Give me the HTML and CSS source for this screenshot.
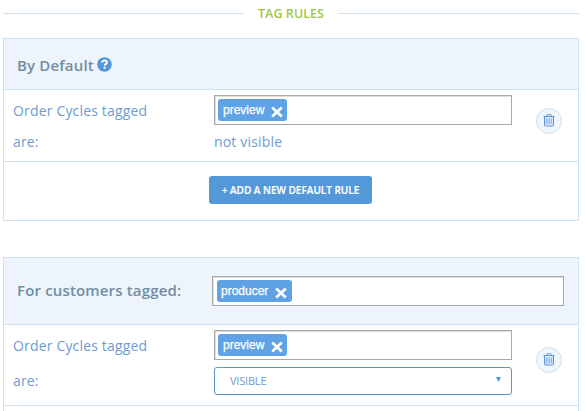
FILE: index.html
```html
<!DOCTYPE html>
<html lang="en">
<head>
<meta charset="utf-8">
<title>Tag Rules</title>
<link rel="stylesheet" href="styles.css">
</head>
<body>
<svg class="defs" width="0" height="0">
  <symbol id="cross" viewBox="0 0 12 12"><path d="M1.2 1.6 10.8 10.4M10.8 1.6 1.2 10.4" stroke="#fff" stroke-width="2.7" fill="none"/></symbol>
  <symbol id="trash" viewBox="0 0 12 13">
    <path d="M2 3.5h8v8H2z" fill="#d3e1f6"/>
    <path d="M.5 2.5h11M3.5 2.5V1.6Q3.5.7 4.4.7h3.2q.9 0 .9.9v.9M1.5 2.5v8.6q0 .9.9.9h7.2q.9 0 .9-.9V2.5" fill="none" stroke="#5c93d0"/>
    <path d="M3.5 4.5v5.5M5.2 4.5v5.5M6.8 4.5v5.5M8.5 4.5v5.5" fill="none" stroke="#8aaee2" stroke-width=".8"/>
  </symbol>
</svg>
<main class="rules">
  <h1 class="legend"><span class="legend-text">TAG RULES</span></h1>

  <section class="group">
    <header class="head">
      <h2 class="title">By Default</h2>
      <svg class="help" viewBox="0 0 15 15"><circle cx="7.5" cy="7.5" r="7.3" fill="#5498da"/><path d="M4.9 5.4Q5.4 3.5 7.5 3.5q2.4 0 2.4 1.9 0 1.2-1.2 1.8-1.1.5-1.1 1.5" fill="none" stroke="#fff" stroke-width="1.9"/><path d="M6.6 9.9h2v1.8h-2z" fill="#fff"/></svg>
    </header>
    <div class="rule">
      <div class="labels"><span>Order Cycles tagged</span><span>are:</span></div>
      <div class="fields">
        <div class="tags"><span class="tag"><span class="tag-name">preview</span><svg class="x"><use href="#cross"/></svg></span></div>
        <span class="value">not visible</span>
      </div>
      <button class="delete" aria-label="Delete"><svg class="bin"><use href="#trash"/></svg></button>
    </div>
    <footer class="foot"><button class="add"><span class="add-text">+ ADD A NEW DEFAULT RULE</span></button></footer>
  </section>

  <section class="group customers">
    <header class="head">
      <h2 class="title">For customers tagged:</h2>
      <div class="tags"><span class="tag"><span class="tag-name">producer</span><svg class="x"><use href="#cross"/></svg></span></div>
    </header>
    <div class="rule">
      <div class="labels"><span>Order Cycles tagged</span><span>are:</span></div>
      <div class="fields">
        <div class="tags"><span class="tag"><span class="tag-name">preview</span><svg class="x"><use href="#cross"/></svg></span></div>
        <div class="select"><span>VISIBLE</span><svg class="arrow" viewBox="0 0 5 5"><path d="M0 0h5L2.5 5z" fill="#5498da"/></svg></div>
      </div>
      <button class="delete" aria-label="Delete"><svg class="bin"><use href="#trash"/></svg></button>
    </div>
    <div class="rest"></div>
  </section>
</main>
</body>
</html>
```
FILE: styles.css
```css
* { box-sizing: border-box; }
body {
  margin: 0;
  height: 411px;
  overflow: hidden;
  background: #fff;
  color: #6e9cd2;
  font: 14px/20px "Open Sans", sans-serif;
  letter-spacing: .17px;
}
.defs { display: block; }
.rules { width: 576px; margin-left: 3px; }
h1, h2 { margin: 0; }
button { padding: 0; border: 0; font-family: inherit; }

.legend {
  display: flex;
  align-items: center;
  gap: 14px;
  height: 27px;
  margin-bottom: 11px;
  color: #9fc642;
  font-size: 12.5px;
  font-weight: 600;
  letter-spacing: .05px;
}
.legend::before, .legend::after {
  content: "";
  flex: 1;
  height: 1px;
  background: #cee1f0;
}
.legend-text { white-space: nowrap; }

.group { border: 1px solid #cee1f0; }
.customers { margin-top: 36px; }
.head {
  display: flex;
  align-items: center;
  height: 51px;
  padding-left: 13px;
  background: #edf4fc;
  border-bottom: 1px solid #cee1f0;
}
.title {
  color: #738da3;
  font-size: 15px;
  font-weight: 600;
  line-height: 20px;
  letter-spacing: .16px;
  padding-top: 2px;
  white-space: nowrap;
}
.help { width: 15px; height: 15px; margin-left: 3px; }

.rule {
  display: flex;
  height: 72px;
  padding: 5px 0 0 9px;
  border-bottom: 1px solid #cee1f0;
}
.labels {
  display: flex;
  flex-direction: column;
  gap: 11px;
  width: 201px;
  padding-top: 6px;
}
.fields {
  display: flex;
  flex-direction: column;
  width: 298px;
}
.value { margin-top: 7px; }
.tags {
  height: 30px;
  padding: 3px;
  background: #fff;
  border: 1px solid #a9a9a9;
  box-shadow: inset 1px 1px 0 #ddd;
}
.tag {
  display: flex;
  justify-content: space-between;
  width: 69px;
  height: 22px;
  padding: 0 4px 0 5px;
  background: #5fa3e6;
  border-radius: 3px;
  color: #fff;
  font: 12px/22px "Liberation Sans", Arial, sans-serif;
  letter-spacing: 0;
  -webkit-text-stroke: .25px #fff;
}
.x { width: 12px; height: 12px; margin-top: 7px; }
.delete {
  display: grid;
  place-items: center;
  width: 26px;
  height: 26px;
  margin: 13px 0 0 24px;
  background: #f0f6fd;
  border: 1px solid #cee1f0;
  border-radius: 50%;
}
.bin { width: 12px; height: 13px; margin-top: -2px; }

.foot { height: 58px; padding: 14px 0 0 205px; }
.add {
  display: block;
  width: 163px;
  height: 28px;
  background: #5498da;
  border-radius: 3px;
  color: #fff;
  font-size: 10px;
  font-weight: 600;
  line-height: 28px;
  letter-spacing: 0;
  white-space: nowrap;
  -webkit-text-stroke: .2px #fff;
}

.customers .head { height: 67px; }
.customers .head .title { width: 195px; padding: 0 0 2px; }
.customers .head .tags { width: 352px; padding-left: 4px; }
.customers .head .tag { width: 75px; padding: 0 5px 0 4px; }
.customers .rule { height: 81px; }
.customers .labels { gap: 15px; }
.customers .delete { margin-top: 17px; }
.select {
  display: flex;
  align-items: center;
  justify-content: space-between;
  height: 28px;
  margin-top: 7px;
  padding: 0 10px 0 15px;
  border: 1px solid #5c95c8;
  border-radius: 3px;
  font-size: 11px;
  letter-spacing: -.2px;
}
.arrow { width: 5px; height: 5px; margin-top: -4px; }
.rest { height: 20px; }
```
